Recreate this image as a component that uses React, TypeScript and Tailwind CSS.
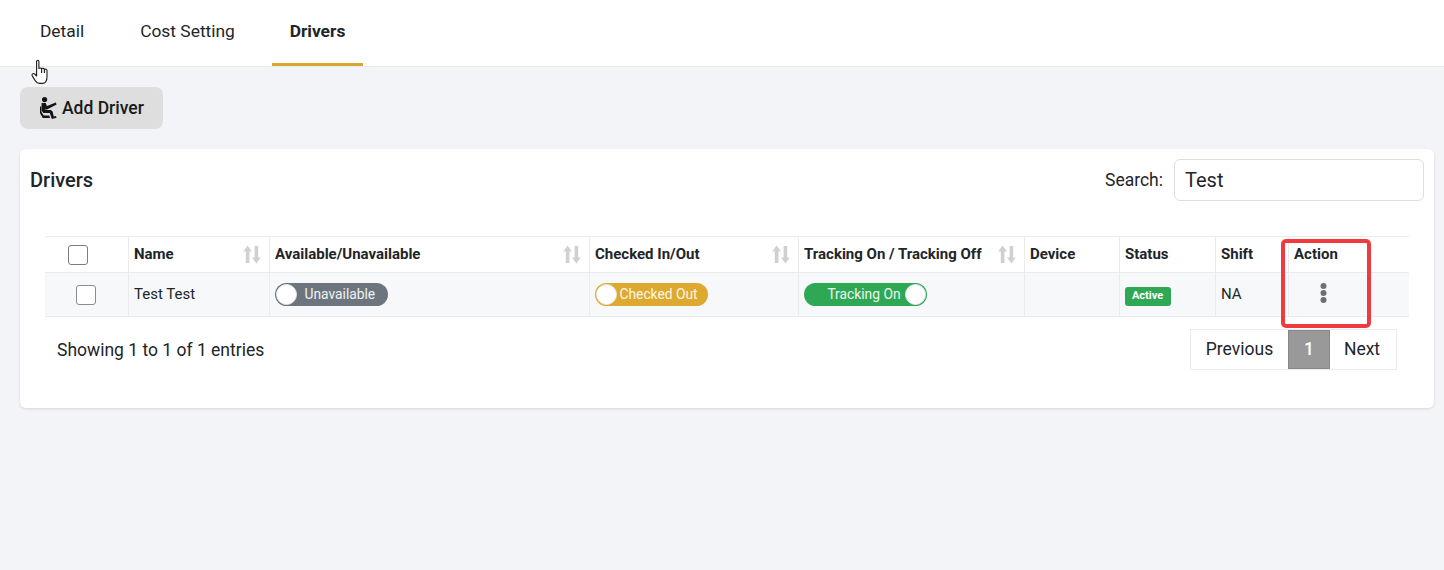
function SortIcon() {
  return (
    <svg width="18" height="19" viewBox="0 0 18 19" className="shrink-0 text-[#d0d0d0]" fill="currentColor">
      <path d="M4.6 0.5 L9 6.4 H6.4 V18 H2.8 V6.4 H0.2 Z" />
      <path d="M13.4 18.5 L9 12.6 H11.6 V1 H15.2 V12.6 H17.8 Z" />
    </svg>
  );
}

function DriverIcon() {
  return (
    <svg width="17" height="22" viewBox="0 0 17 22" fill="#141414">
      <circle cx="4.6" cy="2.6" r="2.6" />
      <path d="M1.6 6 H5.6 L7 9 L15.8 5.6 L16.6 7.4 L6.6 12.8 L5.6 11.4 V13 H10.8 L12.6 14.6 L13.8 19.6 L16 19 L16.6 20.8 L11.8 22 L9.8 16 H3.4 L1.6 13.8 Z" />
      <path d="M0 9.6 H1.4 V15 L3.8 18.4 H9.2 L10 21 H2.8 L0 16.2 Z" />
    </svg>
  );
}

function HandCursor() {
  return (
    <svg width="18" height="26" viewBox="0 0 18 26" fill="white" stroke="#1c1c1c" strokeWidth="1.1" strokeLinejoin="round" className="absolute left-[31px] top-[59px]">
      <path d="M5.6 2.4 C5.6 0.9 7.9 0.9 7.9 2.4 V9.5 C8.5 8.7 10.2 8.8 10.6 9.8 C11.2 9 13 9.2 13.4 10.4 C14.2 9.8 15.9 10.2 16 11.7 V17.5 C16 21 14.6 24.4 11.4 24.4 H8.4 C6.4 24.4 5.4 23.4 4.2 21.6 L1.2 16.6 C0.5 15.2 2.2 13.8 3.6 15 L5.6 17 Z" />
      <path d="M10.6 10 V14 M13.4 10.5 V14" fill="none" />
    </svg>
  );
}

function KebabIcon() {
  return (
    <svg width="7" height="20" viewBox="0 0 7 20" fill="#6f6f6f">
      <circle cx="3.5" cy="3" r="3" />
      <circle cx="3.5" cy="10" r="3" />
      <circle cx="3.5" cy="17" r="3" />
    </svg>
  );
}

function Toggle({ label, color, on, textClass }: { label: string; color: string; on?: boolean; textClass: string }) {
  return (
    <div className={`flex h-[23px] items-center rounded-full ${color} ${on ? 'flex-row-reverse pr-[1px]' : 'pl-[1px]'}`}>
      <span className="h-[21px] w-[21px] shrink-0 rounded-full border border-[#e8e8e8] bg-white" />
      <span className={`text-[13.8px] leading-[15px] text-white/90 ${textClass}`}>{label}</span>
    </div>
  );
}

function HeaderCell({ label, sort, last }: { label: string; sort?: boolean; last?: boolean }) {
  return (
    <th className={`border-l border-[#ebebeb] pl-[5.5px] pr-[5px] text-left font-bold ${last ? '' : 'border-r'}`}>
      <div className="flex items-center justify-between pr-[3px]">
        <span>{label}</span>
        {sort && <SortIcon />}
      </div>
    </th>
  );
}

export default function App() {
  return (
    <div className="relative min-h-[570px] bg-[#f3f4f8] font-['Roboto',sans-serif] text-[#212529]">
      <div className="flex h-[67px] border-b border-[#ebebeb] bg-white pl-[22px] text-[17.4px]">
        <div className="flex h-[66px] w-[80px] items-center justify-center pb-[3px]">Detail</div>
        <div className="ml-[19px] flex h-[66px] w-[133px] items-center justify-center pb-[3px]">Cost Setting</div>
        <div className="ml-[18px] flex h-[66px] w-[91px] items-center justify-center border-b-[3px] border-[#d9a62e] font-bold">Drivers</div>
      </div>
      <HandCursor />

      <div className="px-[20px] pt-[20px]">
        <button className="flex h-[42px] w-[143px] items-center gap-[5px] rounded-lg bg-[#dedede] pl-[20px] text-[17.5px] font-medium text-[#1a1a1a]">
          <DriverIcon />
          Add Driver
        </button>

        <div className="mt-[20px] h-[259px] w-[1414px] rounded-md bg-white shadow-[0_1px_3px_rgba(0,0,0,0.12)]">
          <div className="flex h-[52px] items-center justify-between px-[10px] pt-[10px]">
            <h2 className="text-[20px] font-medium">Drivers</h2>
            <div className="flex items-center gap-[11px]">
              <span className="text-[17.5px]">Search:</span>
              <input readOnly value="Test" className="h-[42px] w-[250px] rounded-md border border-[#dedede] bg-white px-[10px] text-[20px] text-[#212529]" />
            </div>
          </div>

          <div className="px-[25px] pt-[35px]">
            <table className="w-[1364px] table-fixed border-collapse text-[15px]">
              <colgroup>
                <col className="w-[83px]" />
                <col className="w-[141px]" />
                <col className="w-[320px]" />
                <col className="w-[209px]" />
                <col className="w-[226px]" />
                <col className="w-[95px]" />
                <col className="w-[96px]" />
                <col className="w-[73px]" />
                <col className="w-[121px]" />
              </colgroup>
              <thead>
                <tr className="h-[36px] border-y border-[#ebebeb]">
                  <th className="border-r border-[#ebebeb]">
                    <div className="ml-[23px] h-[20px] w-[20px] rounded-[3px] border border-[#7d7d7d] bg-white" />
                  </th>
                  <HeaderCell label="Name" sort />
                  <HeaderCell label="Available/Unavailable" sort />
                  <HeaderCell label="Checked In/Out" sort />
                  <HeaderCell label="Tracking On / Tracking Off" sort />
                  <HeaderCell label="Device" />
                  <HeaderCell label="Status" />
                  <HeaderCell label="Shift" />
                  <HeaderCell label="Action" last />
                </tr>
              </thead>
              <tbody>
                <tr className="h-[44px] border-b border-[#ebebeb] bg-[#f7f8fa]">
                  <td className="border-r border-[#ebebeb]">
                    <div className="ml-[31px] h-[20px] w-[20px] rounded-[3px] border border-[#8c8c8c] bg-white" />
                  </td>
                  <td className="border-x border-[#ebebeb] pl-[5.5px] pr-[5px]">Test Test</td>
                  <td className="border-x border-[#ebebeb] px-[5px]">
                    <div className="w-[113px]">
                      <Toggle label="Unavailable" color="bg-[#6c757d]" textClass="ml-[8px]" />
                    </div>
                  </td>
                  <td className="border-x border-[#ebebeb] px-[5px]">
                    <div className="w-[113px]">
                      <Toggle label="Checked Out" color="bg-[#dea92f]" textClass="ml-[3px]" />
                    </div>
                  </td>
                  <td className="border-x border-[#ebebeb] px-[5px]">
                    <div className="w-[123px]">
                      <Toggle label="Tracking On" color="bg-[#2fa856]" on textClass="mr-[4px]" />
                    </div>
                  </td>
                  <td className="border-x border-[#ebebeb]" />
                  <td className="border-x border-[#ebebeb] px-[5px]">
                    <span className="inline-flex h-[19px] w-[46px] items-center justify-center rounded-[3px] bg-[#2fa856] text-[11px] font-bold text-white">Active</span>
                  </td>
                  <td className="border-x border-[#ebebeb] pl-[5.5px] pr-[5px]">NA</td>
                  <td className="border-l border-[#ebebeb]">
                    <div className="flex w-[70px] justify-center pb-[3px]">
                      <KebabIcon />
                    </div>
                  </td>
                </tr>
              </tbody>
            </table>

            <div className="mt-[12px] flex items-start justify-between px-[12px]">
              <div className="pt-[11px] text-[17.5px] leading-[20px]">Showing 1 to 1 of 1 entries</div>
              <div className="flex h-[41px] border border-[#ebebeb] text-[17.5px]">
                <div className="flex w-[97px] items-center justify-center">Previous</div>
                <div className="flex w-[42px] items-center justify-center border border-[#888] bg-[#999999] font-medium text-white">1</div>
                <div className="flex w-[66px] items-center justify-center pr-[2px]">Next</div>
              </div>
            </div>
          </div>
        </div>
      </div>

      <div className="absolute left-[1281px] top-[239px] h-[89px] w-[90px] rounded-[5px] border-4 border-[#ef3b3f]" />
    </div>
  );
}
